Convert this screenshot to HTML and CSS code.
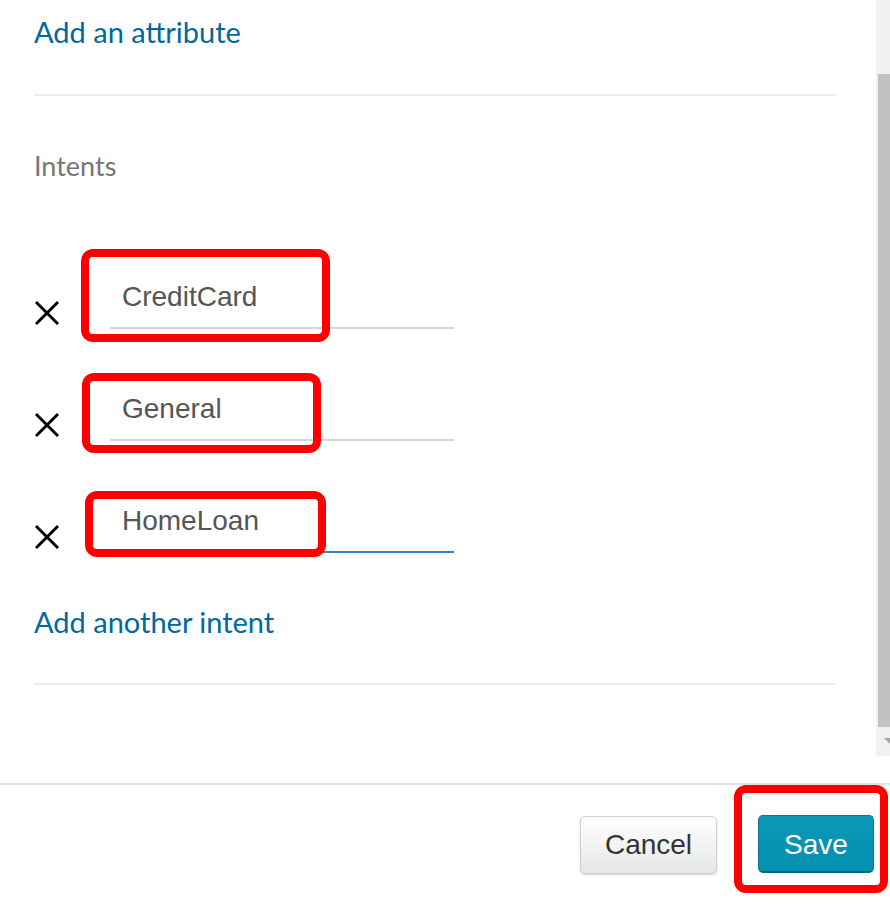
FILE: index.html
```html
<!DOCTYPE html>
<html>
<head>
<meta charset="utf-8">
<link rel="stylesheet" href="styles.css">
</head>
<body>
<div class="dialog">
  <div class="scroll-area">
    <div class="content">
      <a class="link link-attr">Add an attribute</a>
      <div class="divider divider-top"></div>
      <div class="label">Intents</div>
      <div class="intent-list">
        <div class="intent-row">
          <span class="remove"><svg viewBox="0 0 26 26" width="26" height="26"><path d="M2 2 L24 24 M24 2 L2 24" stroke="#000" stroke-width="3" fill="none"/></svg></span>
          <div class="intent-input">CreditCard</div>
        </div>
        <div class="intent-row">
          <span class="remove"><svg viewBox="0 0 26 26" width="26" height="26"><path d="M2 2 L24 24 M24 2 L2 24" stroke="#000" stroke-width="3" fill="none"/></svg></span>
          <div class="intent-input">General</div>
        </div>
        <div class="intent-row">
          <span class="remove"><svg viewBox="0 0 26 26" width="26" height="26"><path d="M2 2 L24 24 M24 2 L2 24" stroke="#000" stroke-width="3" fill="none"/></svg></span>
          <div class="intent-input focused">HomeLoan</div>
        </div>
      </div>
      <a class="link link-intent">Add another intent</a>
      <div class="divider divider-bottom"></div>
    </div>
    <div class="scrollbar">
      <div class="thumb"></div>
      <div class="arrow"></div>
    </div>
  </div>
  <div class="footer">
    <button class="btn btn-cancel">Cancel</button>
    <button class="btn btn-save">Save</button>
  </div>
</div>
<div class="annot annot-1"></div>
<div class="annot annot-2"></div>
<div class="annot annot-3"></div>
<div class="annot annot-4"></div>
</body>
</html>
```
FILE: styles.css
```css
html, body {
  margin: 0;
  padding: 0;
  background: #fff;
}
body {
  width: 890px;
  height: 904px;
  overflow: hidden;
  position: relative;
  font-family: "Liberation Sans", Arial, sans-serif;
}
.dialog {
  display: flex;
  flex-direction: column;
}
.scroll-area {
  display: flex;
  height: 756px;
}
.content {
  flex: 1;
  padding: 14px 40px 0 34px;
  display: flex;
  flex-direction: column;
  align-items: flex-start;
}
.link {
  font-family: Lato, "Open Sans", sans-serif;
  font-size: 29px;
  line-height: 36px;
  color: #0067a3;
  text-decoration: none;
}
.divider {
  align-self: stretch;
  height: 2px;
  background: #ececec;
}
.divider-top {
  margin-top: 44px;
}
.label {
  font-family: Lato, "Open Sans", sans-serif;
  font-size: 27px;
  line-height: 30px;
  color: #767676;
  margin-top: 55px;
}
.intent-list {
  margin-top: 99px;
  display: flex;
  flex-direction: column;
  gap: 63px;
}
.intent-row {
  display: flex;
  align-items: flex-end;
  gap: 50px;
}
.remove {
  width: 26px;
  height: 26px;
  margin-bottom: 3px;
  display: flex;
}
.intent-input {
  width: 332px;
  padding: 1px 0 14px 12px;
  font-size: 28px;
  line-height: 32px;
  color: #555;
  border-bottom: 2px solid #d6d6d6;
}
.intent-input.focused {
  border-bottom-color: #3485bf;
}
.link-intent {
  margin-top: 51px;
}
.divider-bottom {
  margin-top: 43px;
}
.scrollbar {
  width: 14px;
  background: #f1f1f1;
  display: flex;
  flex-direction: column;
  align-items: flex-end;
  padding-top: 74px;
  box-sizing: border-box;
}
.thumb {
  width: 12px;
  height: 653px;
  background: #c1c1c1;
}
.arrow {
  margin-top: 11px;
  width: 0;
  height: 0;
  border-left: 6px solid transparent;
  border-right: 0 solid transparent;
  border-top: 6px solid #a3a3a3;
}
.footer {
  margin-top: 27px;
  border-top: 2px solid #e0e0e0;
  padding: 31px 16px 0 0;
  display: flex;
  justify-content: flex-end;
  gap: 41px;
}
.btn {
  height: 58px;
  font-family: "Liberation Sans", Arial, sans-serif;
  font-size: 28px;
  border-radius: 5px;
  padding: 0;
  margin: 0;
}
.btn-cancel {
  width: 137px;
  color: #333;
  background: linear-gradient(#ffffff, #e6e6e6);
  border: 1px solid #cfcfcf;
  box-shadow: 0 1px 2px rgba(0,0,0,0.18);
}
.btn-save {
  width: 116px;
  margin-top: -1px;
  padding-top: 2px;
  color: #fff;
  background: linear-gradient(#0a97b8, #0590b0);
  border: 1px solid #0a7590;
  border-bottom: 2px solid #076a82;
}
.annot {
  position: absolute;
  border: 8px solid #ff0000;
  border-radius: 12px;
  box-sizing: border-box;
}
.annot-1 { left: 81px; top: 249px; width: 249px; height: 93px; }
.annot-2 { left: 82px; top: 373px; width: 239px; height: 80px; }
.annot-3 { left: 85px; top: 491px; width: 241px; height: 66px; }
.annot-4 { left: 734px; top: 785px; width: 154px; height: 108px; }
```
